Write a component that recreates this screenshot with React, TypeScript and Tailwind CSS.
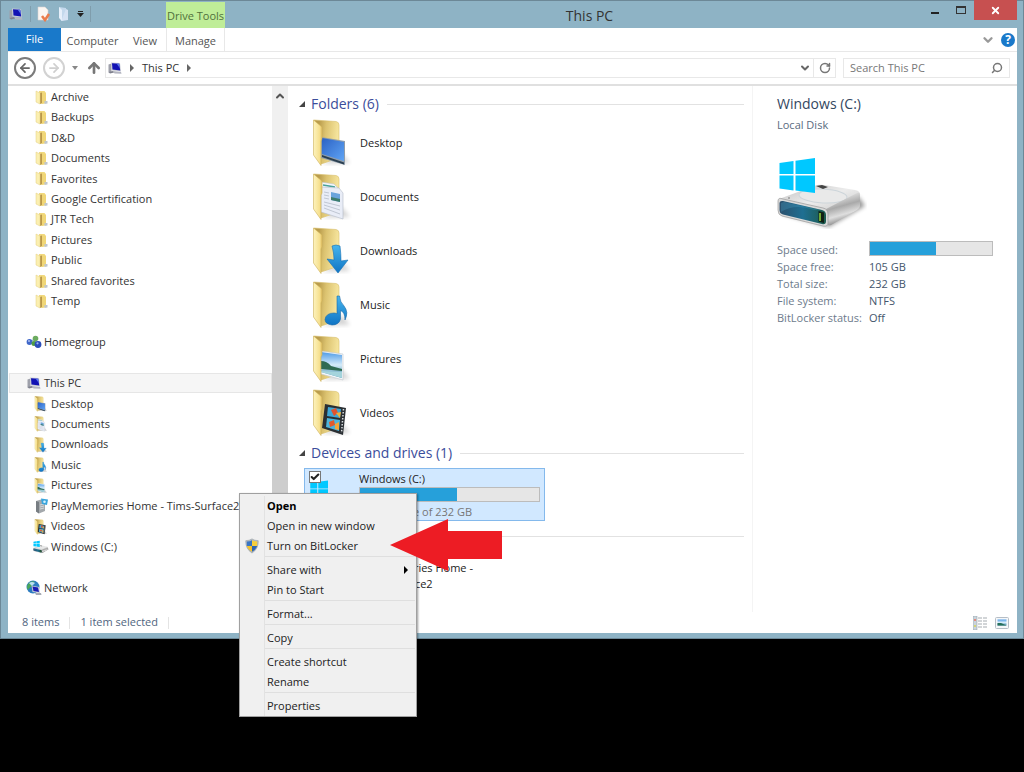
import { ReactNode } from 'react';
import { ArrowLeft, ArrowRight, ArrowUp, Check, ChevronDown, ChevronUp, RotateCw, Search, X } from 'lucide-react';

type FolderKind = 'desktop' | 'documents' | 'downloads' | 'music' | 'pictures' | 'videos';

const userFolders = [
  'Archive',
  'Backups',
  'D&D',
  'Documents',
  'Favorites',
  'Google Certification',
  'JTR Tech',
  'Pictures',
  'Public',
  'Shared favorites',
  'Temp',
];

const pcFolders: { name: string; kind: FolderKind }[] = [
  { name: 'Desktop', kind: 'desktop' },
  { name: 'Documents', kind: 'documents' },
  { name: 'Downloads', kind: 'downloads' },
  { name: 'Music', kind: 'music' },
  { name: 'Pictures', kind: 'pictures' },
  { name: 'Videos', kind: 'videos' },
];

const menuGroups = [
  ['Open', 'Open in new window', 'Turn on BitLocker'],
  ['Share with', 'Pin to Start'],
  ['Format...'],
  ['Copy'],
  ['Create shortcut', 'Rename'],
  ['Properties'],
];

const driveInfo = [
  ['Space free:', '105 GB'],
  ['Total size:', '232 GB'],
  ['File system:', 'NTFS'],
  ['BitLocker status:', 'Off'],
];

function Gradients() {
  return (
    <svg className="absolute h-0 w-0" aria-hidden="true">
      <defs>
        <linearGradient id="flap" x1="0" x2="1">
          <stop offset="0" stopColor="#fdf3bd" />
          <stop offset="0.7" stopColor="#f6e08f" />
          <stop offset="1" stopColor="#e3c264" />
        </linearGradient>
        <linearGradient id="back" x1="0" x2="1" y2="0.2">
          <stop offset="0.2" stopColor="#b99c4c" />
          <stop offset="0.5" stopColor="#dcc370" />
          <stop offset="1" stopColor="#f7e69f" />
        </linearGradient>
        <linearGradient id="screen" x1="0" x2="1" y2="1">
          <stop offset="0" stopColor="#2c62c4" />
          <stop offset="1" stopColor="#5fa4f5" />
        </linearGradient>
        <linearGradient id="blue" x1="0" x2="0" y2="1">
          <stop offset="0" stopColor="#46b5ee" />
          <stop offset="1" stopColor="#0f74c4" />
        </linearGradient>
        <linearGradient id="sky" x1="0" x2="0" y2="1">
          <stop offset="0" stopColor="#4f9be6" />
          <stop offset="0.5" stopColor="#d5ecfa" />
          <stop offset="1" stopColor="#3b86a8" />
        </linearGradient>
        <linearGradient id="metal" x1="0" x2="1" y2="1">
          <stop offset="0" stopColor="#c0c0c0" />
          <stop offset="0.5" stopColor="#ececec" />
          <stop offset="1" stopColor="#c4c4c4" />
        </linearGradient>
        <linearGradient id="side" x1="0" x2="0.3" y2="1">
          <stop offset="0.2" stopColor="#e4e4e4" />
          <stop offset="0.5" stopColor="#a9a9a9" />
          <stop offset="0.75" stopColor="#dedede" />
          <stop offset="1" stopColor="#858585" />
        </linearGradient>
        <linearGradient id="glass" x1="0" x2="1">
          <stop offset="0" stopColor="#2b4f6c" />
          <stop offset="0.5" stopColor="#1f6f92" />
          <stop offset="1" stopColor="#1c5a4c" />
        </linearGradient>
        <filter id="soft">
          <feGaussianBlur stdDeviation="2" />
        </filter>
      </defs>
    </svg>
  );
}

function FolderIcon({ kind, className }: { kind: FolderKind; className: string }) {
  return (
    <svg viewBox="0 0 40 48" className={className} aria-hidden="true">
      <path d="M10 45L38 44L30 34Z" fill="#000" opacity="0.16" filter="url(#soft)" />
      <path d="M2 1L24 2.5Q27 3 27 6V39L9 45Z" fill="url(#back)" stroke="#d9bf6d" strokeWidth="0.6" />
      {kind === 'desktop' && (
        <>
          <path d="M9 18L33 22V46L9 39Z" fill="#8f9dab" />
          <path d="M10 19L32 23V42L10 35Z" fill="url(#screen)" />
          <path d="M10 36L32 43.500V45.500L10 38Z" fill="#2b3f50" />
        </>
      )}
      {kind === 'documents' && (
        <>
          <path d="M9 9L22 11L26 15V40L9 38Z" fill="#f3f6fb" stroke="#b9c0ca" strokeWidth="0.5" />
          <path d="M11 12L23 14" stroke="#4aa29b" strokeWidth="1.500" />
          <path d="M9 14L27 15L31 20V46L9 39Z" fill="#e9edf7" stroke="#b3bbc8" strokeWidth="0.6" />
          <path d="M12 19L17 20M12 22L17 23M12 25L17 26M12 29L28 33M12 32L28 37M12 35L28 41" stroke="#b5bcc9" strokeWidth="0.8" />
          <path d="M19 19L28 21V29L19 27Z" fill="#6aa4dc" />
          <path d="M19 24L28 26V29L19 27Z" fill="#3d7d6d" />
        </>
      )}
      {kind === 'downloads' && (
        <path
          d="M20 19Q24 17 28 19Q29 27 29 34L36 33L26 46L15 32L22 33Q22 26 20 19Z"
          fill="url(#blue)"
          stroke="#1570b4"
          strokeWidth="0.6"
        />
      )}
      {kind === 'music' && (
        <path
          d="M25 15H27.500Q28 21 32 25Q37 31 33 39Q33 31 28.500 29.500V38Q27 44 20 44Q13 43 13 38.500Q14 32 22 32Q24.500 32 25 33Z"
          fill="url(#blue)"
          stroke="#1868a8"
          strokeWidth="0.6"
        />
      )}
      {kind === 'pictures' && (
        <>
          <path d="M9 16L31 19V45L9 39Z" fill="#f4f7fa" stroke="#bfc6cc" strokeWidth="0.6" />
          <path d="M9 17L30 20V43L9 37Z" fill="url(#sky)" />
          <path d="M9 26Q15 26 19 31L30 34V36L9 34Z" fill="#2f6b52" />
          <path d="M9 36L30 37V43L9 37Z" fill="#a5d4dc" />
        </>
      )}
      {kind === 'videos' && (
        <>
          <path d="M13 15L34 19L31 46L10 39Z" fill="#2a2f33" />
          <path d="M16 18L29 20L28 29L15 27Z" fill="#3fa7d6" />
          <path d="M15 29L28 31L27 42L14 38Z" fill="#4db5dc" />
          <path d="M19 21L24 19L26 24L22 27Z" fill="#e0532f" />
          <path d="M24 24L29 23L28 29Z" fill="#f0b13c" />
          <path d="M17 33L22 31L23 36L18 38Z" fill="#e35a2c" />
          <path d="M23 35L27 33V41L23 40Z" fill="#f3a83a" />
          <path d="M31.500 20L29.500 44" stroke="#d8dde0" strokeWidth="1.500" strokeDasharray="1.500 1.500" />
        </>
      )}
      <path d="M1.500 1L10 8V20L9 22V46.500L1.500 36Z" fill="url(#flap)" stroke="#cdb058" strokeWidth="0.6" />
    </svg>
  );
}

function PlainFolderIcon() {
  return (
    <svg viewBox="0 0 13 15" className="h-[15px] w-[13px]" aria-hidden="true">
      <path d="M4 1H9.500L11 3V13L5 14Z" fill="#f1d97f" />
      <path d="M5 3L7 2.500V13L5 14Z" fill="#b9974a" />
      <path d="M1 1L5 3V14L1 12Z" fill="#fbefb0" stroke="#e3cc80" strokeWidth="0.500" />
      <path d="M7 2.500L11 3V13L7 14Z" fill="#f0d677" />
      <path d="M9.500 11H12.500V13.500L9.500 14Z" fill="#bfc6cd" />
    </svg>
  );
}

function PcIcon() {
  return (
    <svg viewBox="0 0 16 16" className="h-4 w-4 shrink-0" aria-hidden="true">
      <path d="M1.500 4.500L4.500 3.500V12L1.500 12.500Z" fill="#9ea0aa" />
      <path d="M4 2.500L13 3L14 11.500L4.500 10.500Z" fill="#c9cbd4" />
      <path d="M5 3.300L12.200 3.800L13.200 10.500L5.500 9.600Z" fill="#1212b4" />
      <path d="M9.500 3.600L12.200 3.800L12.800 8Z" fill="#5878ee" />
      <path d="M6 11L14 12L14.500 13.800L7.500 13.500Z" fill="#b3b5c0" />
      <path d="M1.500 12L6 11L7 12.500L3 13.500Z" fill="#7d7f8c" />
    </svg>
  );
}

function HomegroupIcon() {
  return (
    <svg viewBox="0 0 16 16" className="h-4 w-4 shrink-0" aria-hidden="true">
      <path d="M4 8L9 5L11 11Z" fill="none" stroke="#9fb4c8" strokeWidth="1.500" />
      <circle cx="3.500" cy="8" r="2.900" fill="#3f67c9" />
      <circle cx="9.500" cy="4.500" r="2.800" fill="#6cab5f" />
      <circle cx="8" cy="9.500" r="2.500" fill="#4e9d43" />
      <circle cx="12" cy="10.500" r="3.400" fill="#2a4dba" />
      <circle cx="11.500" cy="9.300" r="1.100" fill="#9bb3ee" />
      <circle cx="3" cy="7" r="1" fill="#aebff0" />
    </svg>
  );
}

function NetworkIcon() {
  return (
    <svg viewBox="0 0 16 16" className="h-4 w-4 shrink-0" aria-hidden="true">
      <circle cx="7" cy="7" r="6.500" fill="#2d7cc0" />
      <path d="M2 4Q5 0 9 2Q6 3 6 6Q3 8 2 10Q0 7 2 4Z" fill="#4aa75a" />
      <path d="M3 3Q6 1 9 3L6 6Z" fill="#b9e0f2" />
      <path d="M5.500 5.500L13 7L14 13L6.500 12Z" fill="#c5cad3" />
      <path d="M6.500 6.500L12 7.500L13 12L7.500 11Z" fill="#1a1ab4" />
      <path d="M9 13H15L15.500 15H10Z" fill="#a6abb5" />
    </svg>
  );
}

function MediaIcon() {
  return (
    <svg viewBox="0 0 16 16" className="h-4 w-4 shrink-0" aria-hidden="true">
      <path d="M3 3L8 1.500L12 3V13L6 15.500L3 13.500Z" fill="#a3a8ac" />
      <path d="M3 3L6 4V15.500L3 13.500Z" fill="#777d82" />
      <path d="M7 7L11 6M7 9L11 8M7 11L11 10" stroke="#d6dadd" />
      <path d="M8 0.500L15 1.500L14 7L9 6Z" fill="#39a5dd" />
      <circle cx="11.500" cy="3.800" r="1.300" fill="#d5f0fb" />
    </svg>
  );
}

function WindowsLogo() {
  return (
    <g fill="#00c8ff">
      <path d="M2.500 6L16.500 4V17H2.500Z" />
      <path d="M18.500 3.700L38 1V17H18.500Z" />
      <path d="M2.500 18.500H16.500V33.500L2.500 31.500Z" />
      <path d="M18.500 18.500H38V36L18.500 33.500Z" />
    </g>
  );
}

function DriveIcon({ className }: { className: string }) {
  return (
    <svg viewBox="0 0 90 72" className={className} aria-hidden="true">
      <path d="M5 57L52 70L88 49L82 40Z" fill="#000" opacity="0.4" filter="url(#soft)" />
      <path d="M2 42L37 29Q42 27 47 28L78 33Q84 34 83 39L54 55Q51 57 46 56L3 46Z" fill="url(#metal)" />
      <ellipse cx="46" cy="39" rx="24" ry="7" fill="#e9e9e9" stroke="#cdd5da" transform="rotate(3 46 39)" />
      <path d="M39 29L45 28L51 30L46 32Z" fill="#444" />
      <circle cx="12" cy="41" r="1" fill="#999" />
      <path d="M49 52L80 36Q83 35 83 38V49Q83 51 80 53L54 68Q51 69 50 67Z" fill="url(#side)" />
      <path d="M1 44Q1 40 6 42L46 51Q51 52 51 57V66Q51 70 46 69L5 59Q1 58 1 53Z" fill="#dadada" stroke="#999" strokeWidth="0.700" />
      <path d="M2.500 46Q2.500 43.500 6 44L45 53Q49 54 49 58V64Q49 68 45 67L6 57.500Q2.500 56.500 2.500 53Z" fill="url(#glass)" />
      <path d="M4 55Q18 46 37 53L44 53L7 45L4 46Z" fill="#4aa0c2" opacity="0.3" />
      <path d="M41.500 54L47 55.500V66L41.500 64.500Z" fill="#112014" />
      <path d="M43 56V64" stroke="#8fd63c" strokeWidth="1.500" />
      <WindowsLogo />
    </svg>
  );
}

function ShieldIcon() {
  return (
    <svg viewBox="0 0 16 18" className="h-4 w-4" aria-hidden="true">
      <path d="M8 1Q11 3 15 3Q15.500 12 8 17Q0.500 12 1 3Q5 3 8 1Z" fill="#b5bcc2" stroke="#8c959c" strokeWidth="0.600" />
      <path d="M8 2.500V9H2.200V4Q5.500 4 8 2.500Z" fill="#3a76c4" />
      <path d="M8 2.500Q10.500 4 13.800 4V9H8Z" fill="#f6ce3c" />
      <path d="M2.200 9H8V15.500Q3 12.500 2.200 9Z" fill="#f2c22e" />
      <path d="M8 9H13.800Q13 12.500 8 15.500Z" fill="#2f66b4" />
    </svg>
  );
}

function Triangle({ className }: { className?: string }) {
  return (
    <svg viewBox="0 0 4 8" className={`h-2 w-1 ${className ?? ''}`} aria-hidden="true">
      <path d="M0 0L4 4L0 8Z" fill="currentColor" />
    </svg>
  );
}

function TreeRow({ icon, label, child, selected }: { icon: ReactNode; label: string; child?: boolean; selected?: boolean }) {
  return (
    <li>
      <a
        href="#"
        className={`flex h-5 items-center border whitespace-nowrap ${child ? 'gap-0.5 pl-[23px]' : 'gap-0.5 pl-4'} ${
          selected ? 'border-[#e6e6e6] bg-[#f6f6f6]' : 'border-transparent'
        }`}
      >
        <span className="flex w-4 shrink-0 justify-center">{icon}</span>
        {label}
      </a>
    </li>
  );
}

function GroupHeading({ children }: { children?: ReactNode }) {
  return (
    <h2 className="flex h-5 items-center gap-2 pr-2 pl-[11px] text-sm text-[#3b4d9b]">
      <button type="button" aria-label="Toggle group" className="-mr-0.5 w-1.5">
        <svg viewBox="0 0 6 6" className="h-1.5 w-1.5">
          <path d="M6 0V6H0Z" fill="#444" />
        </svg>
      </button>
      {children}
      <span className="h-px flex-1 bg-[#e2e2e2]" />
    </h2>
  );
}

function TitleBar() {
  return (
    <div className="flex h-7 items-start">
      <div className="flex h-7 w-[158px] items-center gap-1.5">
        <PcIcon />
        <span className="h-4 w-px bg-[#7f9dac]" />
        <button type="button" aria-label="Properties">
          <svg viewBox="0 0 14 16" className="h-4 w-3.5">
            <path d="M1 1H8L11 4V14H1Z" fill="#fbf6f2" stroke="#d8d4d0" strokeWidth="0.600" />
            <path d="M5 10L8 14L12 8" fill="none" stroke="#ea7b4b" strokeWidth="2.500" />
          </svg>
        </button>
        <button type="button" aria-label="New folder">
          <svg viewBox="0 0 14 16" className="h-4 w-3.5">
            <path d="M2 1L9 2V13L4 15Z" fill="#c3d8ec" />
            <path d="M2 1L5 4V15L2 12Z" fill="#e6effa" />
            <path d="M9 3L11 4V14L5 15V13Z" fill="#d5e2f3" />
          </svg>
        </button>
        <button type="button" aria-label="Customize toolbar">
          <svg viewBox="0 0 7 6" className="h-1.5 w-[7px]">
            <path d="M1 0H6V1H1ZM0 2H7L3.500 6Z" fill="#222" />
          </svg>
        </button>
        <span className="h-4 w-px bg-[#7f9dac]" />
      </div>
      <div className="mt-0.5 flex h-[26px] w-[59px] items-center justify-center bg-[#bfed98] pt-0.5 text-[11px] whitespace-nowrap text-[#50703c]">
        Drive Tools
      </div>
      <h1 className="flex-1 pt-1 pl-8 text-center text-sm leading-6 text-[#333]">This PC</h1>
      <button type="button" aria-label="Minimize" className="flex h-5 w-[26px] items-center justify-center">
        <span className="mt-1.5 h-0.5 w-2 bg-[#222]" />
      </button>
      <button type="button" aria-label="Maximize" className="flex h-5 w-[26px] items-center justify-center">
        <span className="h-2 w-2.5 border border-t-2 border-[#333]" />
      </button>
      <button type="button" aria-label="Close" className="flex h-5 w-[43px] items-center justify-center bg-[#c75050] text-white">
        <X size={11} strokeWidth={4} />
      </button>
    </div>
  );
}

function RibbonTabs() {
  return (
    <div className="flex h-6 items-center border-b border-[#e8e8e8] bg-white text-[11px] text-[#555]">
      <button type="button" className="h-full w-[53px] bg-[#1979ca] text-white">
        File
      </button>
      <button type="button" className="h-full w-[63px] pt-1">
        Computer
      </button>
      <button type="button" className="h-full w-[42px] pt-1">
        View
      </button>
      <button type="button" className="h-full w-[59px] border-x border-[#e8e8e8] pt-1">
        Manage
      </button>
      <div className="flex flex-1 items-center justify-end gap-1.5 pr-0.5">
        <button type="button" aria-label="Expand ribbon">
          <ChevronDown size={14} strokeWidth={4} className="text-[#999]" />
        </button>
        <button type="button" aria-label="Help" className="h-3.5 w-3.5 rounded-full bg-[#1979ca] text-xs leading-[14px] font-bold text-white">
          ?
        </button>
      </div>
    </div>
  );
}

function AddressBar() {
  return (
    <div className="flex h-[34px] items-center border-b-2 border-[#e0e0e0] bg-white px-1.5 text-[11px] text-[#333]">
      <button type="button" aria-label="Back" className="flex h-[22px] w-[22px] items-center justify-center rounded-full border-2 border-[#7b7b7b] text-[#666]">
        <ArrowLeft size={14} strokeWidth={3} />
      </button>
      <button type="button" aria-label="Forward" className="ml-[7px] flex h-[22px] w-[22px] items-center justify-center rounded-full border-2 border-[#d2d2d2] text-[#cfcfcf]">
        <ArrowRight size={14} strokeWidth={3} />
      </button>
      <button type="button" aria-label="Recent locations" className="ml-[7px]">
        <svg viewBox="0 0 6 4" className="h-1 w-1.5">
          <path d="M0 0H6L3 4Z" fill="#888" />
        </svg>
      </button>
      <button type="button" aria-label="Up" className="ml-2 text-[#777]">
        <ArrowUp size={16} strokeWidth={4} />
      </button>
      <div className="ml-[3px] flex h-5 flex-1 items-center border border-[#e8e8e8] pl-px">
        <PcIcon />
        <Triangle className="mr-2 ml-[7px] text-[#666]" />
        <a href="#">This PC</a>
        <Triangle className="mx-2 text-[#666]" />
        <span className="flex-1" />
        <button type="button" aria-label="Previous locations" className="mr-0.5">
          <ChevronDown size={12} strokeWidth={4} className="text-[#666]" />
        </button>
        <button type="button" aria-label="Refresh" className="flex h-full w-[22px] items-center justify-center border-l border-[#e8e8e8]">
          <RotateCw size={12} strokeWidth={3} className="text-[#777]" />
        </button>
      </div>
      <label className="mr-px ml-[7px] flex h-5 w-[167px] items-center border border-[#e8e8e8] px-1.5">
        <input type="search" placeholder="Search This PC" aria-label="Search This PC" className="w-0 flex-1 outline-none placeholder:text-[#777]" />
        <Search size={12} strokeWidth={3} className="-scale-x-100 text-[#777]" />
      </label>
    </div>
  );
}

function NavigationPane() {
  return (
    <nav className="flex w-[280px] shrink-0">
      <ul className="flex min-w-0 flex-1 flex-col justify-between overflow-hidden pt-px pb-3.5 pl-px text-[11px] text-[#333]">
        {userFolders.map((name) => (
          <TreeRow key={name} child label={name} icon={<PlainFolderIcon />} />
        ))}
        <li className="h-5" />
        <TreeRow label="Homegroup" icon={<HomegroupIcon />} />
        <li className="h-5" />
        <TreeRow label="This PC" icon={<PcIcon />} selected />
        {pcFolders.slice(0, 5).map((f) => (
          <TreeRow key={f.name} child label={f.name} icon={<FolderIcon kind={f.kind} className="h-4 w-3.5" />} />
        ))}
        <TreeRow child label="PlayMemories Home - Tims-Surface2" icon={<MediaIcon />} />
        <TreeRow child label="Videos" icon={<FolderIcon kind="videos" className="h-4 w-3.5" />} />
        <TreeRow child label="Windows (C:)" icon={<DriveIcon className="h-3.5 w-4" />} />
        <li className="h-5" />
        <TreeRow label="Network" icon={<NetworkIcon />} />
      </ul>
      <div className="flex w-4 flex-col bg-[#f0f0f0]">
        <button type="button" aria-label="Scroll up" className="flex h-5 items-center justify-center text-[#555]">
          <ChevronUp size={12} strokeWidth={4} />
        </button>
        <span className="mt-[104px] flex-1 bg-[#cdcdcd]" />
      </div>
    </nav>
  );
}

function MainPane() {
  return (
    <main className="min-w-0 flex-1 pt-2 pb-5 text-[11px] text-[#222]">
      <GroupHeading>Folders (6)</GroupHeading>
      <ul className="pt-0.5 pb-[3px]">
        {pcFolders.map((f) => (
          <li key={f.name}>
            <a href="#" className="flex h-[54px] items-center gap-2 pl-6">
              <FolderIcon kind={f.kind} className="h-12 w-10" />
              {f.name}
            </a>
          </li>
        ))}
      </ul>
      <GroupHeading>Devices and drives (1)</GroupHeading>
      <div className="mt-[5px] ml-4 flex h-[53px] w-[241px] gap-2 border border-[#84b9ec] bg-[#d1e8ff] px-1">
        <div className="relative w-[42px]">
          <svg viewBox="0 0 40 36" className="mt-2.5 h-5 w-5" aria-hidden="true">
            <WindowsLogo />
          </svg>
          <label className="absolute top-0.5 left-0 flex h-3 w-3 items-center justify-center border border-[#777] bg-white">
            <input type="checkbox" defaultChecked aria-label="Select Windows (C:)" className="absolute inset-0 appearance-none" />
            <Check size={10} strokeWidth={5} className="pointer-events-none relative" />
          </label>
        </div>
        <div className="flex-1">
          <p className="pt-px leading-[17px]">Windows (C:)</p>
          <div className="h-[15px] border border-[#bcbcbc] bg-[#e6e6e6]">
            <div className="h-full w-[54%] bg-[#26a0da]" />
          </div>
          <p className="pt-px leading-[17px] text-[#777]">105 GB free of 232 GB</p>
        </div>
      </div>
      <div className="mt-[5px]">
        <GroupHeading />
      </div>
      <a href="#" className="mt-3.5 ml-[72px] block w-[120px] leading-4">
        PlayMemories Home - Tims-Surface2
      </a>
    </main>
  );
}

function DetailsPane() {
  return (
    <aside className="w-[265px] shrink-0 border-l border-[#f4f4f4] pt-2 pl-6 text-[11px] text-[#6d7b8c]">
      <h2 className="text-sm leading-5 text-[#33475f]">Windows (C:)</h2>
      <p className="pt-[3px] text-[#5a6b80]">Local Disk</p>
      <DriveIcon className="mt-[23px] h-[72px] w-[90px]" />
      <dl className="mt-3 grid grid-cols-[92px_1fr] leading-[17px]">
        <dt>Space used:</dt>
        <dd className="mr-6 h-[15px] border border-[#bcbcbc] bg-[#e6e6e6]">
          <div className="h-full w-[54%] bg-[#26a0da]" />
        </dd>
        {driveInfo.map(([label, value]) => (
          <div key={label} className="contents">
            <dt>{label}</dt>
            <dd className="text-[#44566c]">{value}</dd>
          </div>
        ))}
      </dl>
    </aside>
  );
}

function StatusBar() {
  return (
    <footer className="flex h-[21px] items-center bg-white pr-2 pl-3.5 text-[11px] text-[#506580]">
      <span>8 items</span>
      <span className="mx-2.5 h-3 w-px bg-[#e4e4e4]" />
      <span>1 item selected</span>
      <span className="mx-2.5 h-3 w-px bg-[#e4e4e4]" />
      <div className="flex flex-1 justify-end gap-2">
        <button type="button" aria-label="Details view">
          <svg viewBox="0 0 14 14" className="h-3.5 w-3.5">
            <rect width="4" height="14" fill="#c9d4dc" stroke="#8e9aa3" strokeWidth="0.500" />
            <path d="M1 4H3" stroke="#e48a7c" strokeWidth="2" />
            <path d="M1 10H3" stroke="#d4d477" strokeWidth="2" />
            <path d="M5 2H9M5 5H9M5 8H9M5 11H9M10 2H14M10 5H14M10 8H14M10 11H14" stroke="#a5abb0" />
          </svg>
        </button>
        <button type="button" aria-label="Large icons view">
          <svg viewBox="0 0 14 12" className="h-3 w-3.5">
            <rect x="0.500" y="0.500" width="13" height="11" rx="1" fill="#f5f7f9" stroke="#b6bec6" />
            <rect x="2.500" y="2.500" width="9" height="6" fill="url(#sky)" />
            <path d="M2.500 6L6 6L11.500 8.500H2.500Z" fill="#26705a" />
          </svg>
        </button>
      </div>
    </footer>
  );
}

function ContextMenu() {
  return (
    <div
      role="menu"
      className="absolute top-[493px] left-[239px] w-[178px] border border-[#a0a0a0] bg-[#f0f0f0] pt-0.5 text-[11px] text-[#222] shadow-[1px_1px_2px_rgba(0,0,0,0.4)]"
    >
      {menuGroups.map((group, i) => (
        <div key={i} role="group">
          {i > 0 && (
            <div className="ml-6 flex h-1 items-start border-l border-[#e2e2e2] pr-px">
              <span className="h-px flex-1 bg-[#dfdfdf]" />
            </div>
          )}
          {group.map((item) => (
            <button key={item} type="button" role="menuitem" className="flex h-5 w-full items-center text-left">
              <span className="flex h-5 w-6 items-center justify-center">{item === 'Turn on BitLocker' && <ShieldIcon />}</span>
              <span className={`flex h-5 flex-1 items-center border-l border-[#e2e2e2] pl-0.5 ${item === 'Open' ? 'font-bold text-black' : ''}`}>
                {item}
              </span>
              {item === 'Share with' && <Triangle className="mr-2 text-black" />}
            </button>
          ))}
        </div>
      ))}
    </div>
  );
}

export default function App() {
  return (
    <div className="relative min-h-screen bg-black font-['Open_Sans',sans-serif]">
      <Gradients />
      <div className="border border-[#6c8897] bg-[#8eb3c5] pr-1.5 pb-[5px] pl-[7px]">
        <div className="-mt-px">
          <TitleBar />
        </div>
        <RibbonTabs />
        <AddressBar />
        <div className="flex bg-white">
          <NavigationPane />
          <MainPane />
          <DetailsPane />
        </div>
        <StatusBar />
      </div>
      <ContextMenu />
      <svg viewBox="0 0 112 52" className="absolute top-[519px] left-[390px] h-[52px] w-28" aria-hidden="true">
        <path d="M0 26L58 0V12H112V40H58V52Z" fill="#ed1c24" />
      </svg>
    </div>
  );
}
